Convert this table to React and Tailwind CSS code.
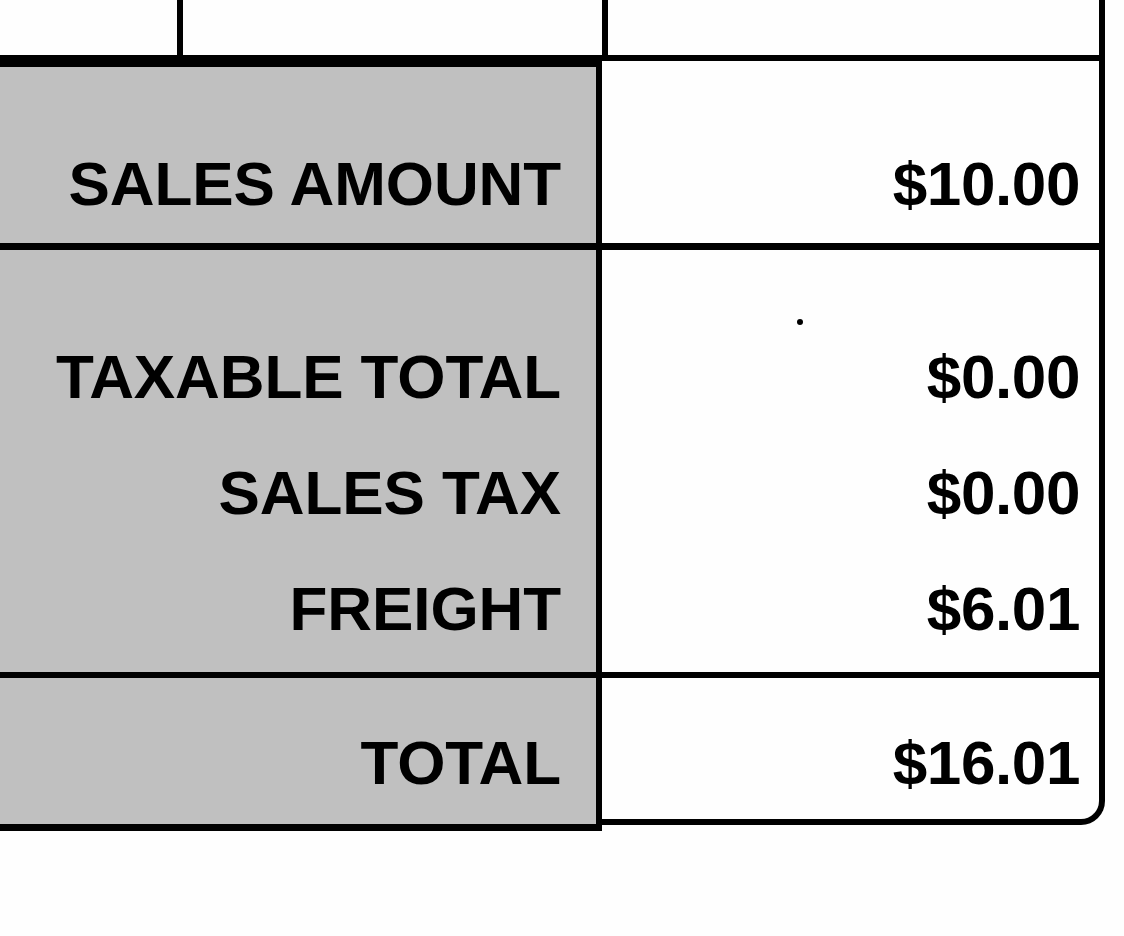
export default function App() {
  const font = "font-['Liberation_Sans',Arial,sans-serif]";
  return (
    <div className={`w-[1124px] h-[936px] bg-[#fefefe] ${font} font-bold text-black text-[62px] leading-[116px]`}>
      {/* top partial row */}
      <div className="flex h-[55px]">
        <div className="w-[177px]" />
        <div className="w-[425px] border-l-[6px] border-black" />
        <div className="w-[503px] border-x-[6px] border-black" />
      </div>

      {/* row 1 */}
      <div className="flex h-[195px]">
        <div className="w-[602px] bg-[#c0c0c0] border-t-[12px] border-r-[6px] border-b-[7px] border-black flex items-end justify-end pr-[35px] pb-[1px] tracking-[-0.1px]">
          <span>SALES AMOUNT</span>
        </div>
        <div className="w-[503px] border-t-[6px] border-r-[6px] border-b-[7px] border-black flex items-end justify-end pr-[19px] pb-[1px] tracking-[-0.4px]">
          <span>$10.00</span>
        </div>
      </div>

      {/* row 2 */}
      <div className="flex h-[428px]">
        <div className="w-[602px] bg-[#c0c0c0] border-r-[6px] border-b-[6px] border-black flex flex-col items-end pr-[35px] pt-[69px] tracking-[-0.1px]">
          <span>TAXABLE TOTAL</span>
          <span>SALES TAX</span>
          <span>FREIGHT</span>
        </div>
        <div className="relative w-[503px] border-r-[6px] border-b-[6px] border-black flex flex-col items-end pr-[19px] pt-[69px] tracking-[-0.4px]">
          <span className="absolute left-[195px] top-[69px] w-[6px] h-[6px] rounded-full bg-black" />
          <span>$0.00</span>
          <span>$0.00</span>
          <span>$6.01</span>
        </div>
      </div>

      {/* row 3 */}
      <div className="flex items-start">
        <div className="w-[602px] h-[153px] bg-[#c0c0c0] border-r-[6px] border-b-[7px] border-black flex justify-end pr-[35px] pt-[27px] tracking-[-0.1px]">
          <span>TOTAL</span>
        </div>
        <div className="w-[503px] h-[147px] border-r-[6px] border-b-[6px] border-black rounded-br-[24px] flex justify-end pr-[19px] pt-[27px] tracking-[-0.4px]">
          <span>$16.01</span>
        </div>
      </div>
    </div>
  );
}
